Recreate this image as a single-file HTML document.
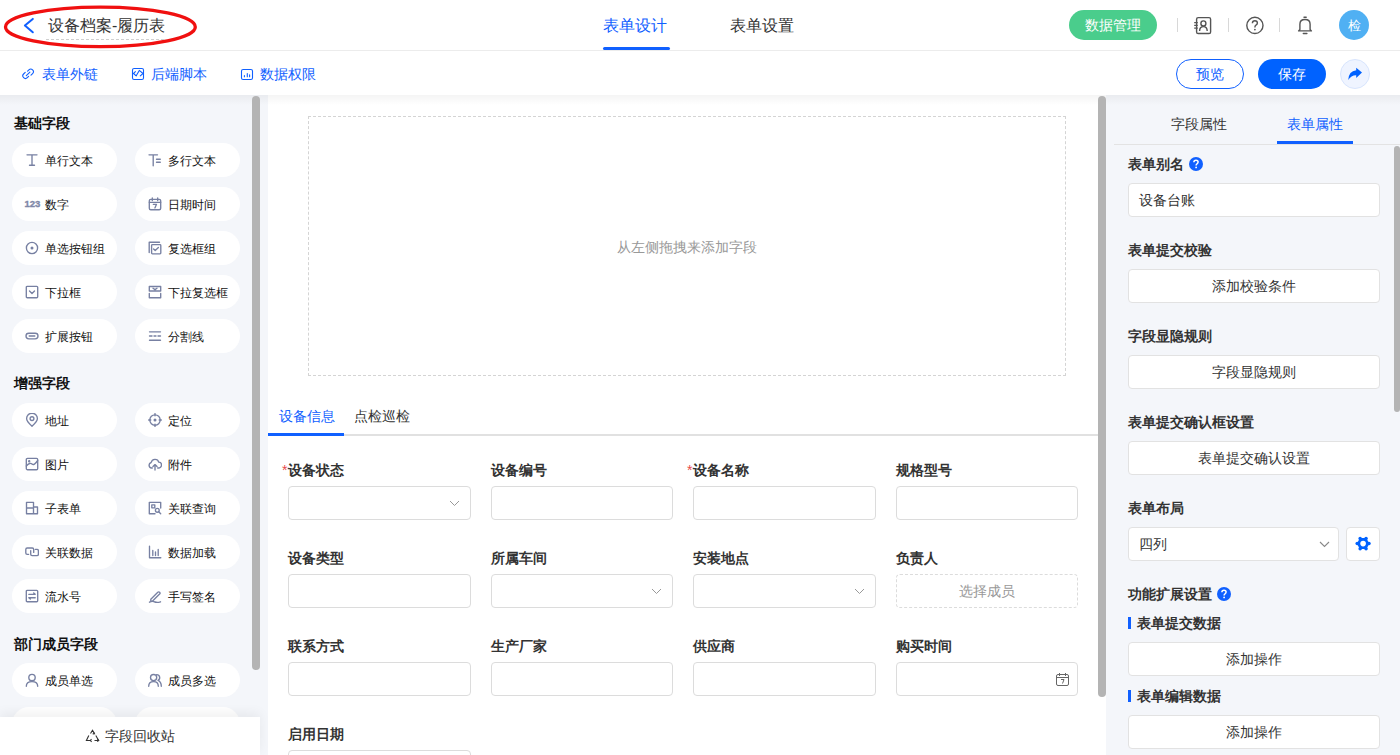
<!DOCTYPE html>
<html><head><meta charset="utf-8">
<style>
*{box-sizing:border-box;margin:0;padding:0}
html,body{width:1400px;height:755px;overflow:hidden;background:#f4f6fa;font-family:"Liberation Sans",sans-serif;color:#333;font-size:14px}
.abs{position:absolute}
.t{position:absolute;white-space:nowrap;line-height:1}
#hdr{position:absolute;left:0;top:0;width:1400px;height:51px;background:#fff;border-bottom:1px solid #ececec}
#bar{position:absolute;left:0;top:51px;width:1400px;height:44px;background:#fff}
#shadow{position:absolute;left:0;top:95px;width:1400px;height:10px;background:linear-gradient(rgba(0,0,0,0.045),rgba(0,0,0,0));z-index:5}
.sep{position:absolute;top:18px;width:1px;height:14px;background:#d8d8d8}
.blue{color:#1060ff}
.lcard{position:absolute;width:105px;height:34px;border-radius:17px;background:#fff}
.lcard .ic{position:absolute;left:13px;top:10px;width:14px;height:14px}
.lcard .tx{position:absolute;left:33px;top:12px;font-size:12px;line-height:12px;color:#111;white-space:nowrap}
.lh{position:absolute;left:14px;font-size:14px;font-weight:bold;color:#111;line-height:14px}
.sb{position:absolute;background:#b4b4b4;border-radius:4px;z-index:6}
.inp{position:absolute;width:183px;height:34px;border:1px solid #dcdcdc;border-radius:4px;background:#fff}
.flab{position:absolute;font-size:14px;font-weight:bold;color:#333;line-height:14px;white-space:nowrap}
.rlab{position:absolute;left:1128px;font-size:14px;font-weight:bold;color:#333;line-height:14px;white-space:nowrap}
.rbtn{position:absolute;left:1128px;width:252px;height:34px;border:1px solid #e2e2e2;border-radius:4px;background:#fff;text-align:center;line-height:32px;font-size:14px;color:#333}
</style></head><body>

<!-- header -->
<div id="hdr">
  <svg class="abs" style="left:2px;top:5px" width="198" height="44" viewBox="0 0 198 44"><ellipse cx="98.4" cy="21.9" rx="94.9" ry="19.7" fill="none" stroke="#f01010" stroke-width="3.3"/></svg>
  <svg class="abs" style="left:22px;top:17px" width="14" height="17" viewBox="0 0 14 17"><path d="M10.8 1.9 L2.9 8.6 L10.8 15.3" fill="none" stroke="#1060ff" stroke-width="2" stroke-linecap="round" stroke-linejoin="round"/></svg>
  <div class="t" style="left:48px;top:18px;font-size:16px;color:#333">设备档案-履历表</div>
  <div class="abs" style="left:46px;top:39px;width:118px;border-top:1px dashed #d0d0d0"></div>
  <div class="t" style="left:603px;top:18px;font-size:16px;color:#1060ff">表单设计</div>
  <div class="abs" style="left:603px;top:47px;width:67px;height:3px;border-radius:2px;background:#1060ff"></div>
  <div class="t" style="left:730px;top:18px;font-size:16px;color:#333">表单设置</div>
  <div class="abs" style="left:1069px;top:10px;width:88px;height:30px;border-radius:15px;background:#4acd8c;color:#fff;text-align:center;line-height:30px;font-size:14px">数据管理</div>
  <div class="sep" style="left:1177px"></div>
  <div class="sep" style="left:1228px"></div>
  <div class="sep" style="left:1279px"></div>
  <!-- contact icon -->
  <svg class="abs" style="left:1192px;top:15px" width="22" height="20" viewBox="0 0 22 20" fill="none" stroke="#555" stroke-width="1.4"><rect x="4.6" y="2.6" width="14" height="15.9" rx="1.6"/><circle cx="11.4" cy="8.4" r="2.5"/><path d="M7.6 16.1Q7.6 11.6 11.4 11.6Q15.2 11.6 15.2 16.1"/><path d="M2.2 7.6h3.6M2.2 10.3h3.6M2.2 13.1h3.6" stroke-width="1.2"/></svg>
  <!-- help -->
  <svg class="abs" style="left:1244px;top:15px" width="22" height="22" viewBox="0 0 22 22"><circle cx="10.9" cy="10.4" r="8.1" fill="none" stroke="#555" stroke-width="1.4"/><path d="M8.4 8.2Q8.4 5.8 10.9 5.8Q13.4 5.8 13.4 8.1Q13.4 9.5 11.7 10.3Q10.9 10.8 10.9 12.4" fill="none" stroke="#555" stroke-width="1.4"/><circle cx="10.9" cy="14.6" r="0.9" fill="#555"/></svg>
  <!-- bell -->
  <svg class="abs" style="left:1296px;top:15px" width="18" height="21" viewBox="0 0 18 21" fill="none" stroke="#555" stroke-width="1.4" stroke-linecap="round"><path d="M8 2.3h2.2M7.3 18.5h3.6"/><path d="M2.6 15.9L3.9 14.6V9.2Q3.9 4.5 9 4.5Q14.1 4.5 14.1 9.2V14.6L15.4 15.9Z" stroke-linejoin="round"/></svg>
  <div class="abs" style="left:1339px;top:10px;width:30px;height:30px;border-radius:50%;background:#50b0f3;color:#fff;text-align:center;line-height:31px;font-size:13px">检</div>
</div>

<!-- toolbar -->
<div id="bar">
  <svg class="abs" style="left:21px;top:16px" width="15" height="14" viewBox="0 0 15 14" fill="none" stroke="#1060ff" stroke-width="1.1" stroke-linecap="round"><path d="M4.2 5.4L2.6 7A2.6 2.6 0 0 0 6.3 10.7L7.6 9.4M10 8.2L11.6 6.6A2.6 2.6 0 0 0 7.9 2.9L6.6 4.2M5.3 8.6L8.9 5.1"/></svg>
  <div class="t blue" style="left:42px;top:16px;font-size:14px">表单外链</div>
  <svg class="abs" style="left:131px;top:16px" width="14" height="14" viewBox="0 0 14 14" fill="none" stroke="#1060ff" stroke-width="1.1" stroke-linejoin="round" stroke-linecap="round"><rect x="1.5" y="1.5" width="11" height="11" rx="1.6"/><path d="M4.4 4.6L2.5 6.5L5.2 8.8L8.3 3.4L12 6.5L9.3 8.8"/></svg>
  <div class="t blue" style="left:151px;top:16px;font-size:14px">后端脚本</div>
  <svg class="abs" style="left:240px;top:16px" width="14" height="14" viewBox="0 0 14 14" fill="none" stroke="#1060ff" stroke-width="1.1" stroke-linecap="round"><rect x="1.5" y="2.5" width="11" height="10" rx="1.6"/><path d="M4.4 8.5v1.2M7.3 6.5v3.2M9.6 7.7v2"/></svg>
  <div class="t blue" style="left:260px;top:16px;font-size:14px">数据权限</div>
  <div class="abs" style="left:1176px;top:8px;width:68px;height:30px;border-radius:15px;border:1px solid #1060ff;color:#1060ff;text-align:center;line-height:28px;font-size:14px">预览</div>
  <div class="abs" style="left:1258px;top:8px;width:68px;height:30px;border-radius:15px;background:#0062ff;color:#fff;text-align:center;line-height:30px;font-size:14px">保存</div>
  <div class="abs" style="left:1340px;top:8px;width:30px;height:30px;border-radius:50%;background:#eff4ff;border:1px solid #d8e5fd"></div>
  <svg class="abs" style="left:1345px;top:14px" width="20" height="18" viewBox="0 0 20 18"><path d="M11.2 2.7L17 7.6L11.2 13V10.2Q6.2 10.1 3.2 14.9Q3.8 6 11.2 5.2Z" fill="#0062ff"/></svg>
</div>
<div id="shadow"></div>

<!-- left panel -->
<div id="left">
<div class="lh" style="top:116px">基础字段</div>
<div class="lcard" style="left:12px;top:143px"><svg class="ic" width="14" height="14" viewBox="0 0 14 14" fill="none" stroke="#7780a2" stroke-width="1.35" stroke-linecap="round" stroke-linejoin="round"><path d="M2 1.8h10M7 1.8v10.4M4.5 12.2h5"/></svg><div class="tx">单行文本</div></div>
<div class="lcard" style="left:135px;top:143px"><svg class="ic" width="14" height="14" viewBox="0 0 14 14" fill="none" stroke="#7780a2" stroke-width="1.35" stroke-linecap="round" stroke-linejoin="round"><path d="M1 1.8h8.5M5.2 1.8v11M8.5 6.2h3.8M8.5 9.2h3.8"/></svg><div class="tx">多行文本</div></div>
<div class="lcard" style="left:12px;top:187px"><div class="ic" style="font-size:9.5px;font-weight:bold;color:#7f88a8;line-height:13px;top:9.5px;left:12.5px;letter-spacing:0px;-webkit-text-stroke:0.35px #7f88a8">123</div><div class="tx">数字</div></div>
<div class="lcard" style="left:135px;top:187px"><svg class="ic" width="14" height="14" viewBox="0 0 14 14" fill="none" stroke="#7780a2" stroke-width="1.35" stroke-linecap="round" stroke-linejoin="round"><rect x="1.3" y="2.3" width="11.4" height="10.4" rx="1.5"/><path d="M1.3 5.3h11.4M4.3 1v2.5M9.7 1v2.5M5.3 7.3h3.2l-1.6 3.6"/></svg><div class="tx">日期时间</div></div>
<div class="lcard" style="left:12px;top:231px"><svg class="ic" width="14" height="14" viewBox="0 0 14 14" fill="none" stroke="#7780a2" stroke-width="1.35" stroke-linecap="round" stroke-linejoin="round"><circle cx="7" cy="7" r="5.6"/><circle cx="7" cy="7" r="1.5" fill="#7780a2" stroke="none"/></svg><div class="tx">单选按钮组</div></div>
<div class="lcard" style="left:135px;top:231px"><svg class="ic" width="14" height="14" viewBox="0 0 14 14" fill="none" stroke="#7780a2" stroke-width="1.35" stroke-linecap="round" stroke-linejoin="round"><path d="M1.2 11.5V1.2H11.5"/><rect x="3.6" y="3.6" width="9.2" height="9.2" rx="0.8"/><path d="M5.6 8l1.6 1.6 3.2-3.2"/></svg><div class="tx">复选框组</div></div>
<div class="lcard" style="left:12px;top:275px"><svg class="ic" width="14" height="14" viewBox="0 0 14 14" fill="none" stroke="#7780a2" stroke-width="1.35" stroke-linecap="round" stroke-linejoin="round"><rect x="1.3" y="1.3" width="11.4" height="11.4" rx="1"/><path d="M4.5 6l2.5 2.5L9.5 6"/></svg><div class="tx">下拉框</div></div>
<div class="lcard" style="left:135px;top:275px"><svg class="ic" width="14" height="14" viewBox="0 0 14 14" fill="none" stroke="#7780a2" stroke-width="1.35" stroke-linecap="round" stroke-linejoin="round"><path d="M1.3 1.5h11.4v4.5H1.3zM5 3.3l2 1.3 2-1.3M1.3 8.5v4.2h11.4V8.5"/></svg><div class="tx">下拉复选框</div></div>
<div class="lcard" style="left:12px;top:319px"><svg class="ic" width="14" height="14" viewBox="0 0 14 14" fill="none" stroke="#7780a2" stroke-width="1.35" stroke-linecap="round" stroke-linejoin="round"><rect x="1" y="4.2" width="12" height="5.6" rx="2.8"/><path d="M4.2 7h5.6"/></svg><div class="tx">扩展按钮</div></div>
<div class="lcard" style="left:135px;top:319px"><svg class="ic" width="14" height="14" viewBox="0 0 14 14" fill="none" stroke="#7780a2" stroke-width="1.35" stroke-linecap="round" stroke-linejoin="round"><path d="M1.5 2.8h11M1.5 11.2h11M1.5 7h2.5M6 7h2M10 7h2.5"/></svg><div class="tx">分割线</div></div>
<div class="lh" style="top:376px">增强字段</div>
<div class="lcard" style="left:12px;top:403px"><svg class="ic" width="14" height="14" viewBox="0 0 14 14" fill="none" stroke="#7780a2" stroke-width="1.35" stroke-linecap="round" stroke-linejoin="round"><path d="M7 13.2Q1.6 8.5 1.6 5.6A5.4 5.4 0 0 1 12.4 5.6Q12.4 8.5 7 13.2Z"/><circle cx="7" cy="5.6" r="1.9"/></svg><div class="tx">地址</div></div>
<div class="lcard" style="left:135px;top:403px"><svg class="ic" width="14" height="14" viewBox="0 0 14 14" fill="none" stroke="#7780a2" stroke-width="1.35" stroke-linecap="round" stroke-linejoin="round"><circle cx="7" cy="7" r="5.2"/><circle cx="7" cy="7" r="1.5" fill="#7780a2" stroke="none"/><path d="M7 0.6v2.2M7 11.2v2.2M0.6 7h2.2M11.2 7h2.2"/></svg><div class="tx">定位</div></div>
<div class="lcard" style="left:12px;top:447px"><svg class="ic" width="14" height="14" viewBox="0 0 14 14" fill="none" stroke="#7780a2" stroke-width="1.35" stroke-linecap="round" stroke-linejoin="round"><rect x="1.3" y="1.3" width="11.4" height="11.4" rx="1.2"/><path d="M1.3 9Q5 5 7 7T12.7 3.5"/><circle cx="4.2" cy="4.2" r="0.5" fill="#7780a2"/></svg><div class="tx">图片</div></div>
<div class="lcard" style="left:135px;top:447px"><svg class="ic" width="14" height="14" viewBox="0 0 14 14" fill="none" stroke="#7780a2" stroke-width="1.35" stroke-linecap="round" stroke-linejoin="round"><path d="M4.3 11H3.6A2.8 2.8 0 0 1 3.2 5.5A3.9 3.9 0 0 1 10.8 5.2A2.9 2.9 0 0 1 10.4 11H9.7M7 13V7.8M5 9.6l2-2 2 2"/></svg><div class="tx">附件</div></div>
<div class="lcard" style="left:12px;top:491px"><svg class="ic" width="14" height="14" viewBox="0 0 14 14" fill="none" stroke="#7780a2" stroke-width="1.35" stroke-linecap="round" stroke-linejoin="round"><path d="M1.5 1.3h7v11.4h-7zM1.5 7h7M8.5 6h4v6.7h-4"/></svg><div class="tx">子表单</div></div>
<div class="lcard" style="left:135px;top:491px"><svg class="ic" width="14" height="14" viewBox="0 0 14 14" fill="none" stroke="#7780a2" stroke-width="1.35" stroke-linecap="round" stroke-linejoin="round"><path d="M12.7 7V1.3H1.3v11.4H7"/><rect x="3.8" y="3.8" width="3" height="3"/><circle cx="9.3" cy="9.3" r="1.9"/><path d="M10.7 10.7l2 2"/></svg><div class="tx">关联查询</div></div>
<div class="lcard" style="left:12px;top:535px"><svg class="ic" width="14" height="14" viewBox="0 0 14 14" fill="none" stroke="#7780a2" stroke-width="1.35" stroke-linecap="round" stroke-linejoin="round"><path d="M3.6 9.4H2.2Q0.8 9.4 0.8 8V4.4Q0.8 3 2.2 3H7.3Q8.7 3 8.7 4.4V7.4M5.7 5.6V9.2Q5.7 10.6 7.1 10.6H12Q13.4 10.6 13.4 9.2V5.8Q13.4 4.4 12 4.4H10.4"/></svg><div class="tx">关联数据</div></div>
<div class="lcard" style="left:135px;top:535px"><svg class="ic" width="14" height="14" viewBox="0 0 14 14" fill="none" stroke="#7780a2" stroke-width="1.35" stroke-linecap="round" stroke-linejoin="round"><path d="M1.5 1.2v11.5h11.3M4.8 5.5v5M7.5 7v3.5M10.2 4.5v6"/></svg><div class="tx">数据加载</div></div>
<div class="lcard" style="left:12px;top:579px"><svg class="ic" width="14" height="14" viewBox="0 0 14 14" fill="none" stroke="#7780a2" stroke-width="1.35" stroke-linecap="round" stroke-linejoin="round"><rect x="1.3" y="1.3" width="11.4" height="11.4" rx="1"/><path d="M3.8 5.3h6.4l-1.5-1.3M10.2 8.7H3.8l1.5 1.3"/></svg><div class="tx">流水号</div></div>
<div class="lcard" style="left:135px;top:579px"><svg class="ic" width="14" height="14" viewBox="0 0 14 14" fill="none" stroke="#7780a2" stroke-width="1.35" stroke-linecap="round" stroke-linejoin="round"><path d="M2.8 10.3L9.8 3.3a1.2 1.2 0 0 1 1.8 1.8L4.6 12.1H2.8zM1.5 13.2Q4 11.8 7 13Q9.5 14 12.5 12.8"/></svg><div class="tx">手写签名</div></div>
<div class="lh" style="top:637px">部门成员字段</div>
<div class="lcard" style="left:12px;top:663px"><svg class="ic" width="14" height="14" viewBox="0 0 14 14" fill="none" stroke="#7780a2" stroke-width="1.35" stroke-linecap="round" stroke-linejoin="round"><circle cx="7" cy="4.5" r="3.2"/><path d="M1.3 13.3Q1.3 8.6 7 8.6Q12.7 8.6 12.7 13.3"/></svg><div class="tx">成员单选</div></div>
<div class="lcard" style="left:135px;top:663px"><svg class="ic" width="14" height="14" viewBox="0 0 14 14" fill="none" stroke="#7780a2" stroke-width="1.35" stroke-linecap="round" stroke-linejoin="round"><circle cx="5.6" cy="4.6" r="3.1"/><path d="M0.7 13.3Q0.7 8.6 5.6 8.6Q10.3 8.6 10.3 13.3M8.6 1.6A3 3 0 0 1 10 7.3Q13.3 8.6 13.3 13.3"/></svg><div class="tx">成员多选</div></div>
<div class="lcard" style="left:12px;top:707px"></div>
<div class="lcard" style="left:135px;top:707px"></div>
</div><!--/left-->
<div class="abs" style="left:0;top:717px;width:260px;height:38px;background:#fff;box-shadow:0 -4px 12px rgba(0,0,0,0.06)"><svg class="abs" style="left:85px;top:12px" width="15" height="15" viewBox="0 0 15 15" fill="none" stroke="#333" stroke-width="1.1"><path d="M5.5 4.5L7.5 1.2 9.5 4.5M10.8 6.5l2.8 5H9.5M5.5 11.5H1.4l2.4-5"/><path d="M8.5 3.2l1 1.5-1.8.2M12.5 9.8l1 1.7-1.3 1M6.5 10.2l-1.1 1.3 1.2 1.3"/></svg><div class="t" style="left:105px;top:12px;font-size:14px;color:#333">字段回收站</div></div>
<div class="sb" style="left:252px;top:96px;width:8px;height:574px"></div>

<!-- canvas -->
<div class="abs" style="left:268px;top:95px;width:838px;height:660px;background:#fff"></div>
<div id="canvas">
<div class="abs" style="left:308px;top:116px;width:758px;height:260px;border:1px dashed #d4d4d4"></div>
<div class="t" style="left:617px;top:240px;font-size:14px;color:#999">从左侧拖拽来添加字段</div>
<div class="t" style="left:279px;top:409px;font-size:14px;color:#1060ff">设备信息</div>
<div class="t" style="left:354px;top:409px;font-size:14px;color:#333">点检巡检</div>
<div class="abs" style="left:268px;top:434px;width:830px;height:2px;background:#e1e1e1"></div>
<div class="abs" style="left:268px;top:433px;width:76px;height:3px;background:#1060ff"></div>
<div class="flab" style="left:282px;top:463px"><span style="color:#e84a4a;font-weight:normal;margin-right:1px">*</span>设备状态</div>
<div class="inp" style="left:288px;top:486px;width:183px;"><svg class="abs" style="right:10px;top:13px" width="11" height="7" viewBox="0 0 11 7"><path d="M1 1l4.5 4.5L10 1" fill="none" stroke="#999" stroke-width="1"/></svg></div>
<div class="flab" style="left:491px;top:463px">设备编号</div>
<div class="inp" style="left:491px;top:486px;width:182px;"></div>
<div class="flab" style="left:687px;top:463px"><span style="color:#e84a4a;font-weight:normal;margin-right:1px">*</span>设备名称</div>
<div class="inp" style="left:693px;top:486px;width:183px;"></div>
<div class="flab" style="left:896px;top:463px">规格型号</div>
<div class="inp" style="left:896px;top:486px;width:182px;"></div>
<div class="flab" style="left:288px;top:551px">设备类型</div>
<div class="inp" style="left:288px;top:574px;width:183px;"></div>
<div class="flab" style="left:491px;top:551px">所属车间</div>
<div class="inp" style="left:491px;top:574px;width:182px;"><svg class="abs" style="right:10px;top:13px" width="11" height="7" viewBox="0 0 11 7"><path d="M1 1l4.5 4.5L10 1" fill="none" stroke="#999" stroke-width="1"/></svg></div>
<div class="flab" style="left:693px;top:551px">安装地点</div>
<div class="inp" style="left:693px;top:574px;width:183px;"><svg class="abs" style="right:10px;top:13px" width="11" height="7" viewBox="0 0 11 7"><path d="M1 1l4.5 4.5L10 1" fill="none" stroke="#999" stroke-width="1"/></svg></div>
<div class="flab" style="left:896px;top:551px">负责人</div>
<div class="inp" style="left:896px;top:574px;width:182px;border-style:dashed;"><div class="t" style="left:0;width:100%;text-align:center;top:9px;font-size:14px;color:#999">选择成员</div></div>
<div class="flab" style="left:288px;top:639px">联系方式</div>
<div class="inp" style="left:288px;top:662px;width:183px;"></div>
<div class="flab" style="left:491px;top:639px">生产厂家</div>
<div class="inp" style="left:491px;top:662px;width:182px;"></div>
<div class="flab" style="left:693px;top:639px">供应商</div>
<div class="inp" style="left:693px;top:662px;width:183px;"></div>
<div class="flab" style="left:896px;top:639px">购买时间</div>
<div class="inp" style="left:896px;top:662px;width:182px;"><svg class="abs" style="right:7px;top:9px" width="15" height="15" viewBox="0 0 15 15" fill="none" stroke="#666" stroke-width="1"><rect x="1.5" y="2.5" width="12" height="11" rx="1.5"/><path d="M1.5 5.5h12M4.5 1v3M10.5 1v3M6 7.5h3l-1.5 4"/></svg></div>
<div class="flab" style="left:288px;top:727px">启用日期</div>
<div class="inp" style="left:288px;top:750px;width:183px;"></div>
</div><!--/canvas-->
<div class="sb" style="left:1098px;top:96px;width:8px;height:601px;border-radius:4px"></div>

<!-- right panel -->
<div id="right">
<div class="t" style="left:1171px;top:117px;font-size:14px;color:#333">字段属性</div>
<div class="t" style="left:1287px;top:117px;font-size:14px;color:#1060ff">表单属性</div>
<div class="abs" style="left:1114px;top:144px;width:286px;height:1px;background:#e3e3e3"></div>
<div class="abs" style="left:1277px;top:141px;width:76px;height:3px;background:#1060ff"></div>
<div class="rlab" style="top:157px">表单别名</div><svg class="abs" style="left:1189px;top:157px" width="14" height="14" viewBox="0 0 14 14"><circle cx="7" cy="7" r="7" fill="#1060ff"/><path d="M4.9 5.3Q4.9 3.2 7 3.2Q9.1 3.2 9.1 5.1Q9.1 6.2 8 6.8Q7.1 7.3 7.1 8.4" fill="none" stroke="#fff" stroke-width="1.5"/><circle cx="7.1" cy="10.4" r="0.9" fill="#fff"/></svg>
<div class="rbtn" style="top:183px;text-align:left;padding-left:10px">设备台账</div>
<div class="rlab" style="top:243px">表单提交校验</div>
<div class="rbtn" style="top:269px">添加校验条件</div>
<div class="rlab" style="top:329px">字段显隐规则</div>
<div class="rbtn" style="top:355px">字段显隐规则</div>
<div class="rlab" style="top:415px">表单提交确认框设置</div>
<div class="rbtn" style="top:441px">表单提交确认设置</div>
<div class="rlab" style="top:501px">表单布局</div>
<div class="rbtn" style="top:527px;width:211px;text-align:left;padding-left:10px">四列<svg class="abs" style="right:8px;top:13px" width="11" height="7" viewBox="0 0 11 7"><path d="M1 1l4.5 4.5L10 1" fill="none" stroke="#888" stroke-width="1.1"/></svg></div>
<div class="rbtn" style="top:527px;left:1346px;width:34px"><svg class="abs" style="left:0;top:0" width="34" height="34" viewBox="0 0 34 34"><g fill="#0062ff"><polygon points="21.50,15.60 18.80,20.28 13.40,20.28 10.70,15.60 13.40,10.92 18.80,10.92" stroke="#0062ff" stroke-width="1.6" stroke-linejoin="round"/><circle cx="22.00" cy="15.60" r="1.75"/><circle cx="19.05" cy="20.71" r="1.75"/><circle cx="13.15" cy="20.71" r="1.75"/><circle cx="10.20" cy="15.60" r="1.75"/><circle cx="13.15" cy="10.49" r="1.75"/><circle cx="19.05" cy="10.49" r="1.75"/></g><circle cx="16.1" cy="15.6" r="2.8" fill="#fff"/></svg></div>
<div class="rlab" style="top:587px">功能扩展设置</div><svg class="abs" style="left:1217px;top:587px" width="14" height="14" viewBox="0 0 14 14"><circle cx="7" cy="7" r="7" fill="#1060ff"/><path d="M4.9 5.3Q4.9 3.2 7 3.2Q9.1 3.2 9.1 5.1Q9.1 6.2 8 6.8Q7.1 7.3 7.1 8.4" fill="none" stroke="#fff" stroke-width="1.5"/><circle cx="7.1" cy="10.4" r="0.9" fill="#fff"/></svg>
<div class="abs" style="left:1128px;top:617px;width:3px;height:12px;background:#1060ff"></div><div class="rlab" style="left:1137px;top:616px">表单提交数据</div>
<div class="rbtn" style="top:642px">添加操作</div>
<div class="abs" style="left:1128px;top:690px;width:3px;height:12px;background:#1060ff"></div><div class="rlab" style="left:1137px;top:689px">表单编辑数据</div>
<div class="rbtn" style="top:715px">添加操作</div>
</div><!--/right-->
<div class="sb" style="left:1394px;top:146px;width:6px;height:266px;border-radius:3px"></div>

</body></html>
